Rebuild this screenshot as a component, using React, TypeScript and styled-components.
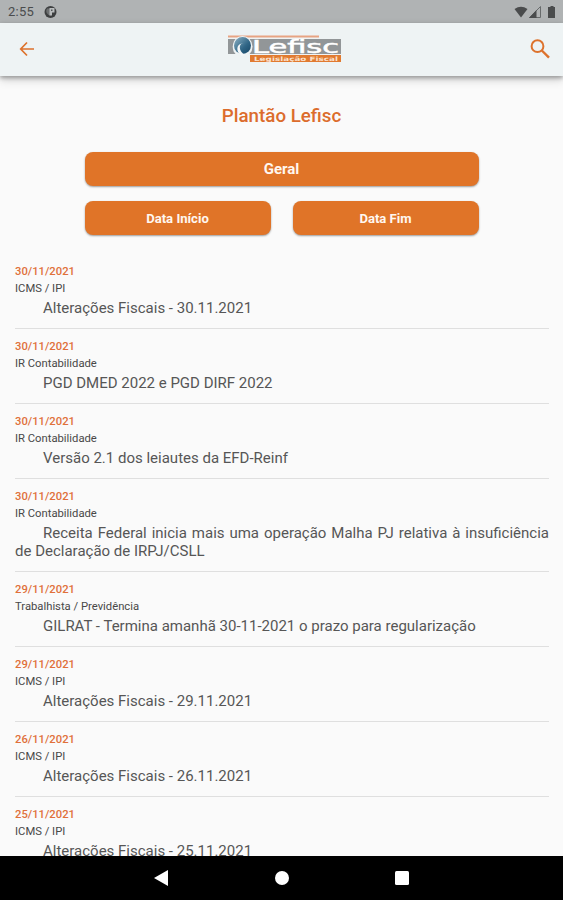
import React from 'react';
import styled, { createGlobalStyle } from 'styled-components';

const GlobalStyle = createGlobalStyle`
  * { box-sizing: border-box; }
  body { margin: 0; background: #fafafa; font-family: Roboto, "Liberation Sans", sans-serif; }
`;

const Screen = styled.div`
  display: flex;
  flex-direction: column;
  width: 563px;
  height: 900px;
  overflow: hidden;
  background: #fafafa;
`;

const StatusBar = styled.div`
  display: flex;
  flex: none;
  align-items: center;
  justify-content: space-between;
  height: 23px;
  padding: 1px 7px 0 8px;
  background: #b0b3b4;
  color: #4a4c4d;
`;

const StatusGroup = styled.div`
  display: flex;
  align-items: center;
`;

const Clock = styled.span`
  width: 36px;
  font-size: 13px;
  line-height: 22px;
  letter-spacing: 0.25px;
`;

const AppBar = styled.header`
  z-index: 1;
  display: grid;
  flex: none;
  grid-template-columns: 40px 1fr 40px;
  align-items: center;
  height: 53px;
  padding: 0 3px 1px 7px;
  background: #eef3f4;
  box-shadow: 0 2px 4px rgba(0, 0, 0, 0.3), 0 4px 9px rgba(0, 0, 0, 0.16);
`;

const IconButton = styled.button`
  display: flex;
  align-items: center;
  justify-content: center;
  height: 40px;
  padding: 0;
  border: 0;
  background: none;
  color: #dd722c;
`;

const LogoSlot = styled.div`
  display: flex;
  justify-content: center;
  padding: 0 0 0 2px;
`;

const Content = styled.main`
  flex: 1;
  min-height: 0;
  overflow: hidden;
`;

const Heading = styled.h1`
  margin: 28px 0 24px;
  color: #dc6c2c;
  font-size: 18.75px;
  font-weight: 500;
  line-height: 24px;
  text-align: center;
`;

const Filters = styled.div`
  display: grid;
  grid-template-columns: 1fr 1fr;
  gap: 15px 22px;
  width: 394px;
  margin: 0 auto 19px;
`;

const FilterButton = styled.button<{ $wide?: boolean }>`
  grid-column: ${(p) => (p.$wide ? '1 / -1' : 'auto')};
  height: 34px;
  padding: 0;
  border: 0;
  border-radius: 8px;
  background: #e07428;
  box-shadow: 0 1px 2px rgba(0, 0, 0, 0.38);
  color: #fff7f0;
  font-family: inherit;
  font-size: ${(p) => (p.$wide ? '15px' : '13.1px')};
  font-weight: 700;
`;

const NewsList = styled.div`
  padding: 0 14px 0 15px;
`;

const NewsItem = styled.article`
  padding: 11px 0;
  border-bottom: 1px solid #dfdfdf;
`;

const NewsDate = styled.div`
  color: #e0703a;
  font-size: 11.25px;
  font-weight: 500;
  line-height: 14px;
`;

const Category = styled.div`
  margin: 2px 0;
  color: #484848;
  font-size: 11.25px;
  line-height: 16px;
`;

const Title = styled.p`
  margin: 0;
  color: #565656;
  font-size: 15px;
  line-height: 18px;
  text-align: justify;
  text-indent: 28px;
`;

const NavBar = styled.nav`
  display: grid;
  flex: none;
  grid-template-columns: repeat(3, 120px);
  align-items: center;
  justify-content: center;
  justify-items: center;
  height: 44px;
  background: #000;
`;

const news = [
  ['30/11/2021', 'ICMS / IPI', 'Alterações Fiscais - 30.11.2021'],
  ['30/11/2021', 'IR Contabilidade', 'PGD DMED 2022 e PGD DIRF 2022'],
  ['30/11/2021', 'IR Contabilidade', 'Versão 2.1 dos leiautes da EFD-Reinf'],
  ['30/11/2021', 'IR Contabilidade', 'Receita Federal inicia mais uma operação Malha PJ relativa à insuficiência de Declaração de IRPJ/CSLL'],
  ['29/11/2021', 'Trabalhista / Previdência', 'GILRAT - Termina amanhã 30-11-2021 o prazo para regularização'],
  ['29/11/2021', 'ICMS / IPI', 'Alterações Fiscais - 29.11.2021'],
  ['26/11/2021', 'ICMS / IPI', 'Alterações Fiscais - 26.11.2021'],
  ['25/11/2021', 'ICMS / IPI', 'Alterações Fiscais - 25.11.2021'],
];

const Logo = () => (
  <svg width="114" height="28" viewBox="0 0 114 28">
    <defs>
      <linearGradient id="globe" x1="0" y1="0" x2="1" y2="1">
        <stop offset="0" stopColor="#8fb3c6" />
        <stop offset="0.6" stopColor="#2f6585" />
        <stop offset="1" stopColor="#174565" />
      </linearGradient>
    </defs>
    <rect x="0" y="0.500" width="91" height="2" fill="#e7a483" />
    <rect x="0" y="4" width="113" height="15" fill="#929698" />
    <rect x="22" y="20" width="91" height="7" fill="#e17a30" />
    <ellipse cx="14.500" cy="11.500" rx="10" ry="10.500" fill="#eef3f4" />
    <path d="M8 3.500C3.500 8 3.500 15 8 19.500L6 17C3 12 4 7 8 3.500Z" fill="#858d93" />
    <ellipse cx="14.500" cy="10.500" rx="8.500" ry="8.500" fill="url(#globe)" />
    <path d="M16 8C10.500 8 10 16 17 20L14 21C7 17 8 8 16 8Z" fill="#f5f7f8" />
    <text x="24" y="17.500" textLength="87" lengthAdjust="spacingAndGlyphs" fill="#fff" stroke="#fff" strokeWidth="0.500" fontFamily="DejaVu Sans" fontSize="17">Lefisc</text>
    <text x="26" y="25.500" textLength="84" lengthAdjust="spacingAndGlyphs" fill="#fae0cc" fontFamily="DejaVu Sans" fontWeight="700" fontSize="6">Legislação Fiscal</text>
  </svg>
);

export default function App() {
  return (
    <>
      <GlobalStyle />
      <Screen>
        <StatusBar>
          <StatusGroup>
            <Clock>2:55</Clock>
            <svg width="14" height="14" viewBox="0 0 14 14">
              <circle cx="6.500" cy="7" r="6" fill="#3d3f40" />
              <path d="M3 3.500H6.500V10.800A4.800 4.800 0 0 1 3 3.500Z" fill="#6c6f70" />
              <path d="M5.500 3H10.500V7.500H8V10.500H5.500Z" fill="#b9bcbd" />
              <path d="M7 4.500H8.500V6H7Z" fill="#55585a" />
            </svg>
          </StatusGroup>
          <StatusGroup>
            <svg width="42" height="15" viewBox="0 0 42 15" fill="#4a4c4d">
              <path d="M0.500 4Q7 -0.500 13.500 4L7 12.500Z" />
              <path d="M26.500 1.500V12.500H15.500Z" fill="none" stroke="#686b6c" />
              <path d="M22.500 5V13H15Z" />
              <path d="M35 2H36.500V1H39.500V2H41V13H34V2Z" />
            </svg>
          </StatusGroup>
        </StatusBar>
        <AppBar>
          <IconButton aria-label="Voltar">
            <svg width="16" height="16" viewBox="0 0 16 16" fill="none" stroke="currentColor" strokeWidth="1.700">
              <path d="M15 8H2M8 1.500L1.700 8L8 14.500" />
            </svg>
          </IconButton>
          <LogoSlot><Logo /></LogoSlot>
          <IconButton aria-label="Buscar">
            <svg width="20" height="20" viewBox="0 0 20 20" fill="none" stroke="currentColor" strokeWidth="2">
              <circle cx="7.500" cy="7.200" r="5.900" />
              <path d="M11.800 11.500L19 18.700" strokeWidth="2.400" />
            </svg>
          </IconButton>
        </AppBar>
        <Content>
          <Heading>Plantão Lefisc</Heading>
          <Filters>
            <FilterButton $wide>Geral</FilterButton>
            <FilterButton>Data Início</FilterButton>
            <FilterButton>Data Fim</FilterButton>
          </Filters>
          <NewsList>
            {news.map(([date, category, title], i) => (
              <NewsItem key={i}>
                <NewsDate>{date}</NewsDate>
                <Category>{category}</Category>
                <Title>{title}</Title>
              </NewsItem>
            ))}
          </NewsList>
        </Content>
        <NavBar>
          <svg width="16" height="18" viewBox="0 0 16 18"><path d="M0 9L14 1V17Z" fill="#fff" /></svg>
          <svg width="16" height="16" viewBox="0 0 16 16"><circle cx="8" cy="8" r="7" fill="#fff" /></svg>
          <svg width="16" height="16" viewBox="0 0 16 16"><rect x="1" y="1" width="14" height="14" rx="1.500" fill="#fff" /></svg>
        </NavBar>
      </Screen>
    </>
  );
}
